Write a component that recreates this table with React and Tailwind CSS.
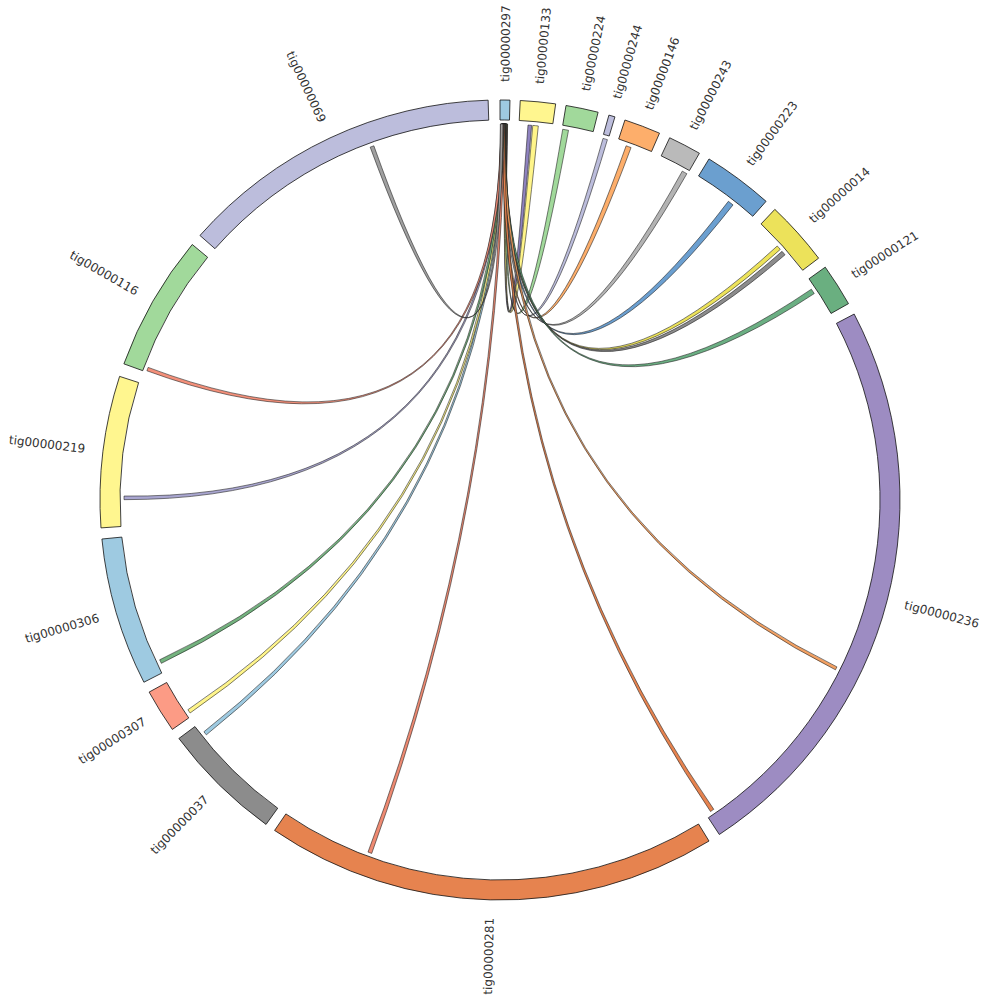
import React from "react";

const CX = 500;
const CY = 500;
const R_OUT = 400;
const R_IN = 380;
const R_LINK = 376;
const R_LABEL = 418;

const segments = [
  ["tig00000297", 0, 1.43, "#9ecae1"],
  ["tig00000133", 2.9, 8.0, "#fff68f"],
  ["tig00000224", 9.5, 14.2, "#a1d99b"],
  ["tig00000244", 15.8, 16.7, "#bcbddc"],
  ["tig00000146", 18.2, 23.5, "#fdae6b"],
  ["tig00000243", 25.1, 29.9, "#bababa"],
  ["tig00000223", 31.5, 41.7, "#6b9fcf"],
  ["tig00000014", 43.4, 52.8, "#ece25a"],
  ["tig00000121", 54.4, 60.6, "#6aaf80"],
  ["tig00000236", 62.3, 146.75, "#9d8cc2"],
  ["tig00000281", 148.5, 214.3, "#e6834f"],
  ["tig00000037", 215.8, 233.4, "#8c8c8c"],
  ["tig00000307", 235, 241.3, "#fc9b85"],
  ["tig00000306", 242.9, 264.4, "#9ecae1"],
  ["tig00000219", 266, 288, "#fff68f"],
  ["tig00000116", 289.9, 309.7, "#a1d99b"],
  ["tig00000069", 311.4, 358.3, "#bcbddc"],
];

// every link ends on tig00000297 at the top
const links = [
  [4.27, 4.83, "#8f83c0"],
  [5.0, 5.85, "#fff58a"],
  [9.6, 10.5, "#a1d99b"],
  [15.9, 16.6, "#bcbddc"],
  [19.6, 20.4, "#fdae6b"],
  [29.0, 29.8, "#b3b3b3"],
  [37.4, 38.3, "#6b9fd0"],
  [47.5, 48.2, "#ede35a"],
  [48.6, 49.3, "#8c8c8c"],
  [55.9, 56.7, "#6baf83"],
  [116.35, 116.85, "#f2a062"],
  [145.35, 145.95, "#e6834f"],
  [199.95, 200.55, "#ee8a72"],
  [231.35, 231.95, "#9ecae1"],
  [235.5, 236.1, "#fff58a"],
  [244.25, 244.85, "#74b37f"],
  [270.05, 270.6, "#a9a6d0"],
  [290.1, 290.65, "#f4907a"],
  [339.8, 340.4, "#a0a0a0"],
];

function pt(deg, r) {
  const a = (deg * Math.PI) / 180;
  return [CX + r * Math.sin(a), CY - r * Math.cos(a)];
}

function f(p) {
  return p[0].toFixed(2) + " " + p[1].toFixed(2);
}

function segPath(a1, a2) {
  const large = a2 - a1 > 180 ? 1 : 0;
  return (
    "M " + f(pt(a1, R_OUT)) +
    " A " + R_OUT + " " + R_OUT + " 0 " + large + " 1 " + f(pt(a2, R_OUT)) +
    " L " + f(pt(a2, R_IN)) +
    " A " + R_IN + " " + R_IN + " 0 " + large + " 0 " + f(pt(a1, R_IN)) +
    " Z"
  );
}

function ribbon(b1, b2, a1, a2) {
  const r = R_LINK;
  return (
    "M " + f(pt(b1, r)) +
    " A " + r + " " + r + " 0 0 1 " + f(pt(b2, r)) +
    " Q " + CX + " " + CY + " " + f(pt(a1, r)) +
    " A " + r + " " + r + " 0 0 1 " + f(pt(a2, r)) +
    " Q " + CX + " " + CY + " " + f(pt(b1, r)) +
    " Z"
  );
}

function Label({ name, mid }) {
  const [x, y] = pt(mid, R_LABEL);
  const right = mid < 180;
  const rot = right ? mid - 90 : mid + 90;
  return (
    <text
      x={x}
      y={y}
      fill="#333"
      fontSize="12"
      textAnchor={right ? "start" : "end"}
      dominantBaseline="central"
      transform={`rotate(${rot} ${x} ${y})`}
    >
      {name}
    </text>
  );
}

export default function App() {
  const n = links.length;
  const step = 0.75 / n;
  return (
    <div className="w-[1000px] h-[1000px] bg-white font-['DejaVu_Sans',sans-serif]">
      <svg width="1000" height="1000" viewBox="0 0 1000 1000">
        {links.map((l, i) => {
          // slot on tig00000297: far targets on the left, near ones on the right
          const slot = n - 1 - i;
          const b1 = 0.05 + slot * step;
          const b2 = b1 + 0.4;
          return (
            <path
              key={i}
              d={ribbon(b1, b2, l[0], l[1])}
              fill={l[2]}
              stroke="#1a1a1a"
              strokeWidth="0.7"
              strokeOpacity="0.8"
            />
          );
        })}
        {segments.map((s) => (
          <path key={s[0]} d={segPath(s[1], s[2])} fill={s[3]} stroke="#111" strokeWidth="0.8" />
        ))}
        {segments.map((s) => (
          <Label key={s[0]} name={s[0]} mid={(s[1] + s[2]) / 2} />
        ))}
      </svg>
    </div>
  );
}
